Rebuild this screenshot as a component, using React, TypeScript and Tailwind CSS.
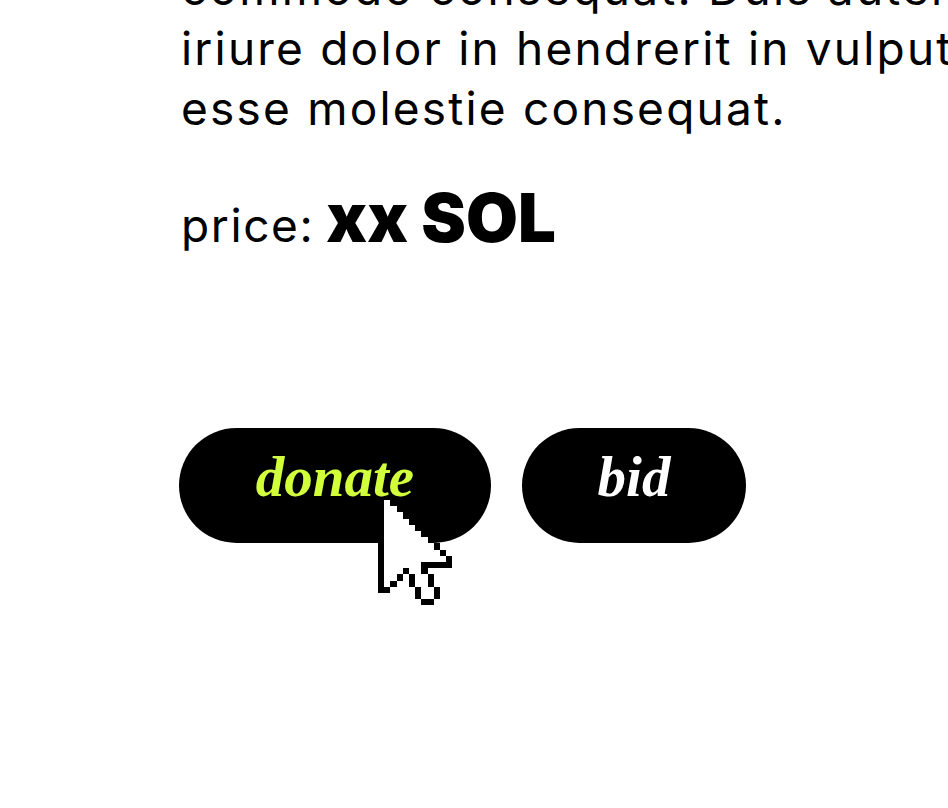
const spans: [number, number, number][] = [
  [0, 1, 1], [1, 1, 2], [2, 1, 3], [3, 1, 4], [4, 1, 5], [5, 1, 6], [6, 1, 7], [7, 1, 8], [8, 1, 9], [9, 1, 10],
  [10, 1, 6], [11, 1, 3], [11, 5, 6], [12, 1, 2], [12, 6, 7], [13, 1, 1], [13, 6, 7], [14, 7, 8], [15, 7, 8],
];
const blacks: [number, number, number, number][] = [
  [0, 1, 1, 14], [0, 14, 2, 1], [2, 13, 1, 1], [3, 12, 1, 1], [4, 11, 1, 1], [5, 12, 1, 2], [6, 14, 1, 2],
  [7, 16, 2, 1], [9, 14, 1, 2], [8, 12, 1, 2], [7, 10, 1, 2], [7, 10, 5, 1], [11, 9, 1, 1], [10, 8, 1, 1], [9, 7, 1, 1],
];

function Cursor() {
  return (
    <svg
      className="absolute left-[378px] top-[500px]"
      width="74.4"
      height="105.4"
      viewBox="0 0 12 17"
      shapeRendering="crispEdges"
    >
      {spans.map(([r, a, b]) => (
        <rect key={`${r}-${a}`} x={a} y={r} width={b - a + 1} height={1} fill="#fff" />
      ))}
      {blacks.map(([x, y, w, h]) => (
        <rect key={`${x}-${y}-${w}`} x={x} y={y} width={w} height={h} fill="#000" />
      ))}
    </svg>
  );
}

export default function App() {
  const script = "font-['Liberation_Serif',serif] italic font-bold text-[57px] leading-none";
  return (
    <div className="relative h-[808px] w-[948px] overflow-hidden bg-white pl-[179px] text-black font-['Inter',sans-serif]">
      <div className="-mt-[42px] pl-[2px] text-[46px] leading-[60px] tracking-[2.2px] whitespace-nowrap">
        <p>commodo consequat. Duis autem vel eum</p>
        <p>iriure dolor in hendrerit in vulputate velit</p>
        <p>esse molestie consequat.</p>
      </div>
      <p className="mt-[35px] pl-[2px] flex items-baseline gap-[12px] whitespace-nowrap">
        <span className="text-[46px] tracking-[1.6px]">price:</span>
        <span className="text-[67px] font-black leading-[90px]">xx SOL</span>
      </p>
      <div className="mt-[165px] flex gap-[31px]">
        <button className="flex h-[115px] w-[312px] justify-center rounded-[58px] bg-black pt-[20px]">
          <span className={`${script} text-[#d2ff3c]`}>donate</span>
        </button>
        <button className="flex h-[115px] w-[224px] justify-center rounded-[58px] bg-black pt-[20px]">
          <span className={`${script} text-white`}>bid</span>
        </button>
      </div>
      <Cursor />
    </div>
  );
}
